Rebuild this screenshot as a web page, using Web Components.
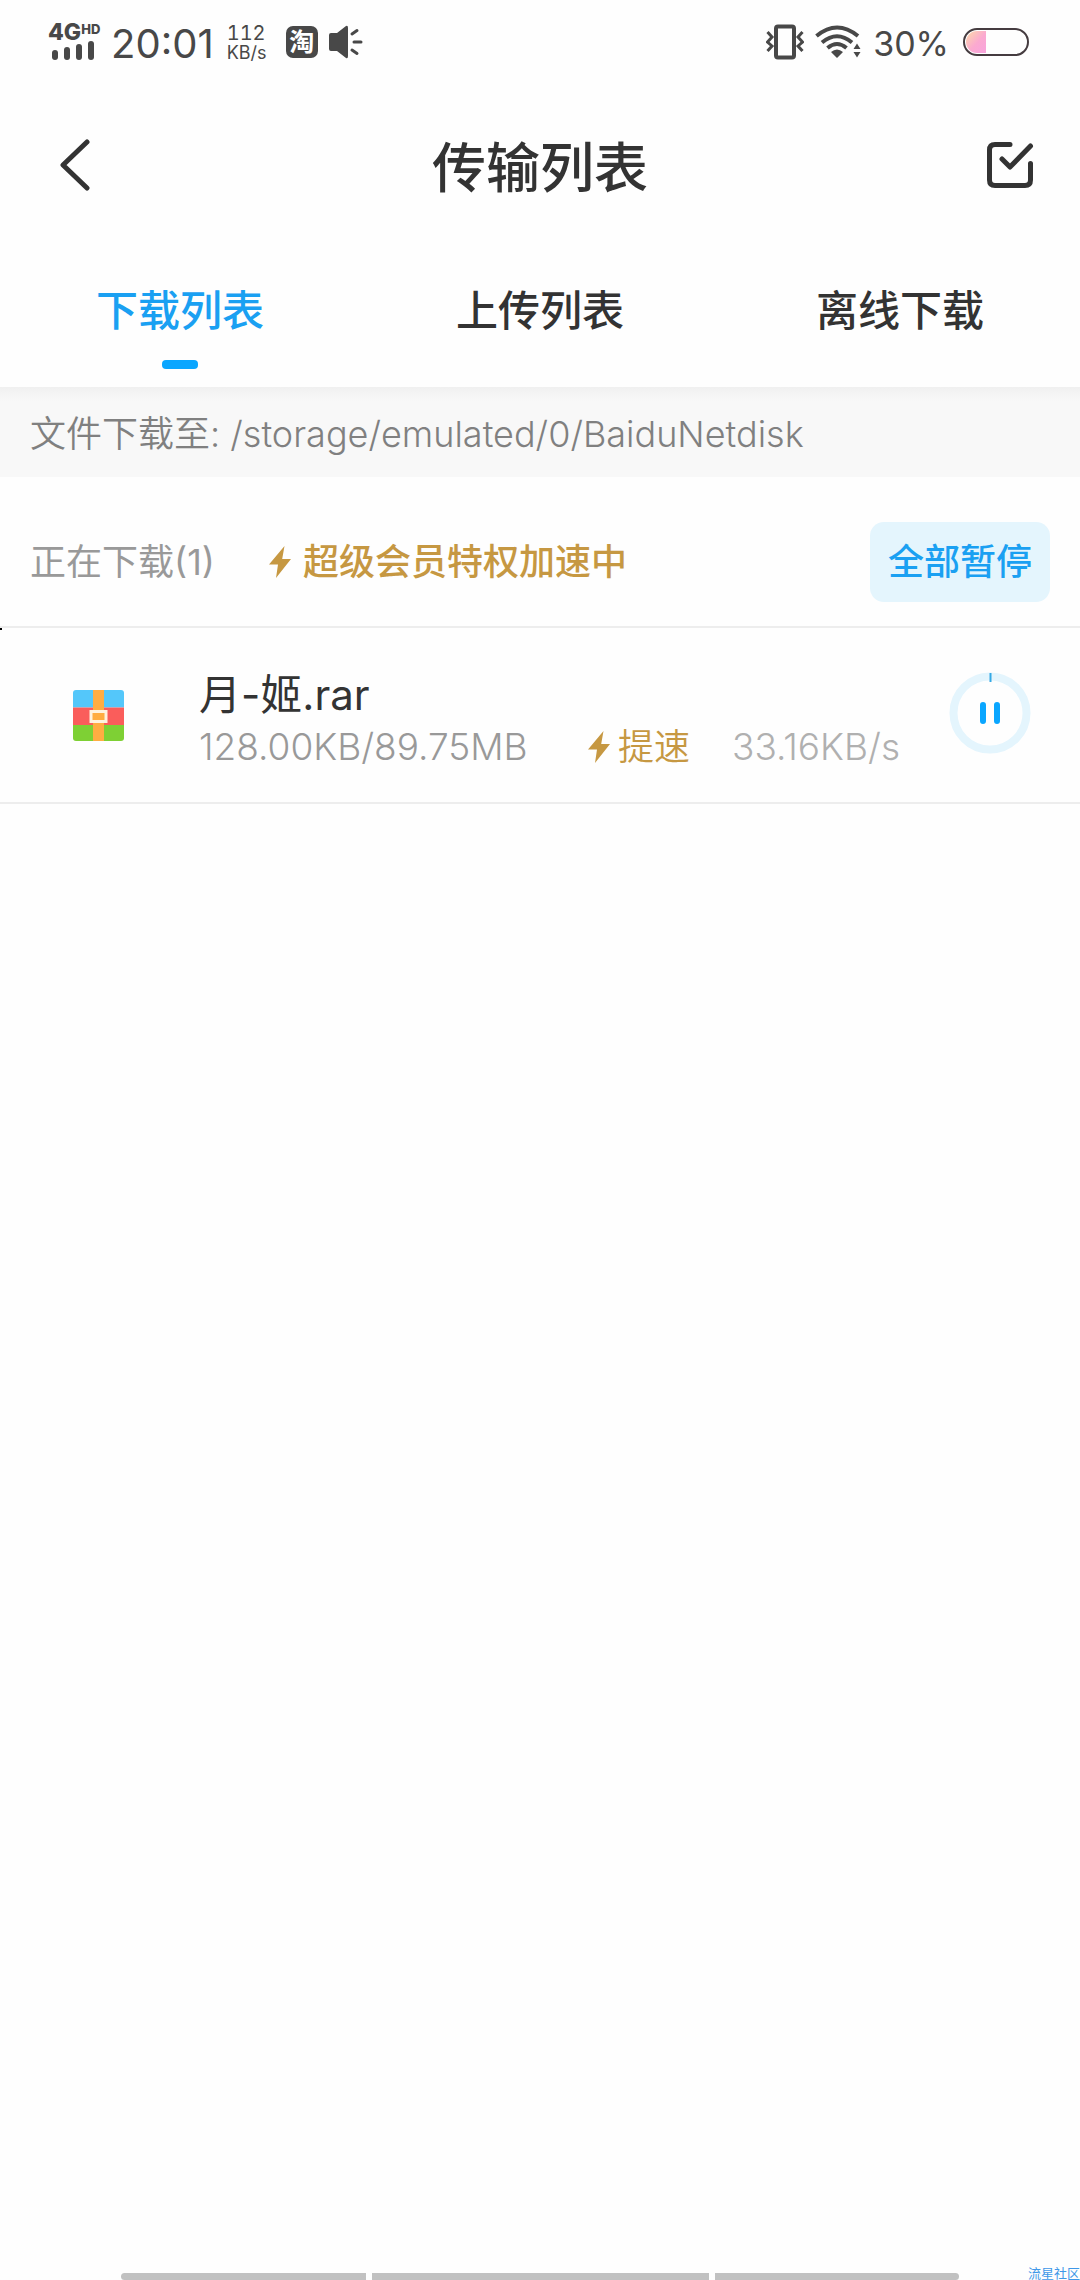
<!DOCTYPE html>
<html lang="zh-CN">
<head>
<meta charset="utf-8">
<meta name="viewport" content="width=device-width, initial-scale=1">
<title>传输列表</title>
<style>
  html, body { margin: 0; }
  body {
    font-family: Inter, "Noto Sans CJK SC", sans-serif;
    color: #333;
    background: #fefefe;
  }
</style>
</head>
<body>
<transfer-app></transfer-app>

<script>
const define = (name, markup) => {
  const template = document.createElement('template');
  template.innerHTML = `<style>
    *, *::before { box-sizing: border-box; }
    svg { display: block; flex: none; }
    button { margin: 0; padding: 0; border: 0; background: none; font: inherit; color: inherit; cursor: pointer; }
  </style>` + markup;
  customElements.define(name, class extends HTMLElement {
    constructor() {
      super();
      this.attachShadow({ mode: 'open' }).append(template.content.cloneNode(true));
    }
  });
};

define('bolt-icon', `
  <style>:host { display: block; flex: none; }</style>
  <svg width="22" height="34" viewBox="0 0 22 34" aria-hidden="true">
    <path d="M15.500 1 L0 19.500 H9 L7 33 L22 14 H13.200 Z" fill="#c69842"/>
  </svg>`);

define('status-bar', `
  <style>
    :host { display: flex; align-items: center; justify-content: space-between; height: 84px; padding: 0 51px 0 48px; color: #484848; }
    .side { display: flex; align-items: center; }
    .net { display: flex; flex-direction: column; width: 52px; font-weight: 800; }
    .label { display: flex; align-items: flex-start; font-size: 23px; line-height: 17px; }
    .label sup { font-size: 13px; line-height: 10px; }
    .time { margin-left: 11px; font-size: 40px; line-height: 48px; padding-top: 4px; }
    .speed { width: 39px; margin-left: 13px; padding-top: 2px; font-size: 20px; line-height: 20px; font-variant-numeric: tabular-nums; }
    .speed .unit { font-size: 18px; }
    .tao { display: grid; place-items: center; width: 32px; height: 32px; margin-left: 20px; border-radius: 7px; background: #484848; color: #fff; font-size: 25px; line-height: 30px; font-weight: 700; }
    .speaker { margin-left: 11px; }
    .wifi { margin-left: 11px; }
    .percent { margin-left: 12px; padding-top: 3px; font-size: 34px; line-height: 40px; }
    .battery { margin-left: 14px; }
  </style>
  <div class="side">
    <div class="net">
      <div class="label"><span>4G</span><sup>HD</sup></div>
      <svg width="50" height="20" viewBox="0 0 50 20" fill="#484848">
        <rect x="4" y="9" width="6" height="10" rx="3"/><rect x="16" y="6" width="6" height="13" rx="3"/>
        <rect x="28" y="3" width="6" height="16" rx="3"/><rect x="40" y="0" width="6" height="19" rx="3"/>
      </svg>
    </div>
    <div class="time">20:01</div>
    <div class="speed"><div>112</div><div class="unit">KB/s</div></div>
    <div class="tao">淘</div>
    <svg class="speaker" width="34" height="34" viewBox="0 0 34 34">
      <path d="M2 8 H8 L17 1 Q19 0 19 3 V31 Q19 34 17 33 L8 26 H2 Q0 26 0 24 V10 Q0 8 2 8Z" fill="#484848"/>
      <path d="M23 9 L28 5.500 M25 17 H32 M23 25 L28 28.500" stroke="#484848" stroke-width="3" stroke-linecap="round"/>
    </svg>
  </div>
  <div class="side">
    <svg width="38" height="36" viewBox="0 0 38 36" fill="none" stroke="#484848">
      <rect x="10" y="2.500" width="18" height="31" rx="2" stroke-width="4"/>
      <path d="M1.500 8 L6 13 L1.500 18 L6 22 L1.500 27 M36.500 8 L32 13 L36.500 18 L32 22 L36.500 27" stroke-width="3"/>
    </svg>
    <svg class="wifi" width="46" height="34" viewBox="0 0 46 34" fill="none" stroke="#484848" stroke-width="4">
      <path d="M1.500 11 Q22 -6 43 11 M7 17.500 Q22 5 37 17.500 M12.500 23 Q22 15 31.500 23"/>
      <path d="M16 27 Q22 22 28 27 L22 33 Z M38.500 24 L42 18.500 L45.500 24 Z M38.500 27 L42 32.500 L45.500 27 Z" fill="#484848" stroke="none"/>
    </svg>
    <div class="percent">30%</div>
    <svg class="battery" width="66" height="28" viewBox="0 0 66 28">
      <defs><linearGradient id="charge" x1="0" y1="0" x2="1" y2="1">
        <stop offset="0" stop-color="#fcdba8"/><stop offset=".55" stop-color="#fba9d0"/><stop offset="1" stop-color="#f8a4dd"/>
      </linearGradient></defs>
      <path d="M23 3 H14 A11 11 0 0 0 14 25 H23 Z" fill="url(#charge)"/>
      <rect x="1" y="1" width="64" height="26" rx="13" fill="none" stroke="#453c40" stroke-width="2"/>
    </svg>
  </div>`);

define('title-bar', `
  <style>
    :host { display: grid; grid-template-columns: 1fr auto 1fr; align-items: center; height: 166px; padding: 0 46px 4px; }
    h1 { margin: 0; padding-top: 8px; font-size: 54px; line-height: 80px; font-weight: 500; }
    .done { justify-self: end; }
    .back { justify-self: start; padding-left: 13px; }
  </style>
  <button class="back" aria-label="返回">
    <svg width="32" height="52" viewBox="0 0 32 52"><path d="M28 3 L4 26 L28 49" fill="none" stroke="#333" stroke-width="5" stroke-linecap="round" stroke-linejoin="round"/></svg>
  </button>
  <h1><slot></slot></h1>
  <button class="done" aria-label="选择">
    <svg width="48" height="48" viewBox="0 0 48 48" fill="none" stroke="#333" stroke-width="5" stroke-linecap="round" stroke-linejoin="round">
      <path d="M24 3.500 H9 Q3.500 3.500 3.500 9 V39 Q3.500 44.500 9 44.500 H39 Q44.500 44.500 44.500 39 V22.500 M16 18 L24 26 L44.500 5"/>
    </svg>
  </button>`);

define('tab-item', `
  <style>
    :host { display: block; flex: 1; }
    button { display: flex; flex-direction: column; align-items: center; width: 100%; height: 137px; padding-top: 30px; font-size: 42px; line-height: 62px; font-weight: 500; }
    button::after { content: ""; width: 36px; height: 9px; margin-top: 18px; border-radius: 4px; }
    :host([selected]) button { color: #1aa0f2; }
    :host([selected]) button::after { background: #0aa6ff; }
  </style>
  <button><slot></slot></button>`);

define('save-path', `
  <style>
    :host { display: block; padding: 21px 30px 17px; font-size: 36px; line-height: 52px; font-weight: 350; color: #808080;
      background: linear-gradient(#f0f0f0, #f8f8f8 14px); }
  </style>
  <slot></slot>`);

define('section-head', `
  <style>
    :host { display: flex; box-sizing: border-box; align-items: center; height: 151px; padding: 20px 30px 0; border-bottom: 2px solid #ededed; font-size: 36px; line-height: 52px; }
    .count { color: #999; }
    .boost { display: flex; align-items: center; gap: 12px; margin-left: 54px; color: #c69842; font-weight: 500; }
    button { height: 80px; margin-left: auto; padding: 0 18px; border-radius: 14px; background: #e4f5fd; color: #1aa0f2; font-weight: 500; }
  </style>
  <div class="count"><slot name="count"></slot></div>
  <div class="boost"><bolt-icon></bolt-icon><slot name="boost"></slot></div>
  <button>全部暂停</button>`);

define('pause-ring', `
  <style>:host { display: block; flex: none; }</style>
  <button aria-label="暂停">
    <svg width="82" height="82" viewBox="0 0 82 82">
      <circle cx="41" cy="41" r="36.500" fill="none" stroke="#e4f5fd" stroke-width="8"/>
      <path d="M41.500 1 V10" stroke="#35a9e5" stroke-width="2"/>
      <path d="M34 33 V49 M48 33 V49" stroke="#0aa6ff" stroke-width="6" stroke-linecap="round"/>
    </svg>
  </button>`);

define('download-row', `
  <style>
    :host { display: flex; box-sizing: border-box; align-items: center; height: 176px; padding: 0 49px 0 72px; border-bottom: 2px solid #ededed; }
    .info { flex: 1; margin-left: 75px; padding-top: 8px; }
    .name { font-size: 42px; line-height: 56px; }
    .meta { display: flex; align-items: center; font-size: 37px; line-height: 48px; font-weight: 350; color: #999; }
    .fast { display: flex; align-items: center; gap: 8px; margin-left: auto; color: #c69842; font-size: 36px; }
    .rate { margin: 0 49px 0 42px; color: #b0b0b0; }
  </style>
  <svg width="52" height="52" viewBox="0 0 52 52" aria-hidden="true">
    <path d="M1 18.500 V4 Q1 1 4 1 H49 Q52 1 52 4 V18.500Z" fill="#54c7fa"/>
    <path d="M1 18.500 H52 V36 H1Z" fill="#fa5d5b"/>
    <path d="M1 36 H52 V49 Q52 52 49 52 H4 Q1 52 1 49Z" fill="#7ed034"/>
    <path d="M21 1 H32 V52 H21Z" fill="#ffad42"/>
    <rect x="19" y="22.500" width="15" height="10" fill="#ffad42" stroke="#fff3df" stroke-width="3"/>
  </svg>
  <div class="info">
    <div class="name"><slot name="name"></slot></div>
    <div class="meta">
      <slot name="size"></slot>
      <div class="fast"><bolt-icon></bolt-icon><span>提速</span></div>
      <div class="rate"><slot name="rate"></slot></div>
    </div>
  </div>
  <pause-ring></pause-ring>`);

define('nav-handles', `
  <style>
    :host { display: grid; grid-template-columns: 115fr 244fr 337fr 243fr 115fr; column-gap: 6px; align-items: end; margin-top: auto; }
    i { height: 7px; background: #c1c1c1; }
    .first { grid-column: 2; border-radius: 4px 0 0 4px; }
    .last { border-radius: 0 4px 4px 0; }
    .mark { justify-self: end; height: 13px; font-size: 13px; line-height: 13px; color: #3f98e8; white-space: nowrap; }
  </style>
  <i class="first"></i><i></i><i class="last"></i><span class="mark"><slot></slot></span>`);

define('transfer-app', `
  <style>
    :host { display: flex; flex-direction: column; min-height: 100vh; }
    nav { display: flex; }
    main { position: relative; }
    .speck { position: absolute; left: 0; top: 151px; width: 2px; height: 2px; background: #000; }
  </style>
  <status-bar></status-bar>
  <title-bar>传输列表</title-bar>
  <nav><tab-item selected>下载列表</tab-item><tab-item>上传列表</tab-item><tab-item>离线下载</tab-item></nav>
  <save-path>文件下载至: /storage/emulated/0/BaiduNetdisk</save-path>
  <main>
    <section-head><span slot="count">正在下载(1)</span><span slot="boost">超级会员特权加速中</span></section-head>
    <download-row><span slot="name">月-姬.rar</span><span slot="size">128.00KB/89.75MB</span><span slot="rate">33.16KB/s</span></download-row>
    <span class="speck"></span>
  </main>
  <nav-handles>流星社区</nav-handles>`);
</script>
</body>
</html>
